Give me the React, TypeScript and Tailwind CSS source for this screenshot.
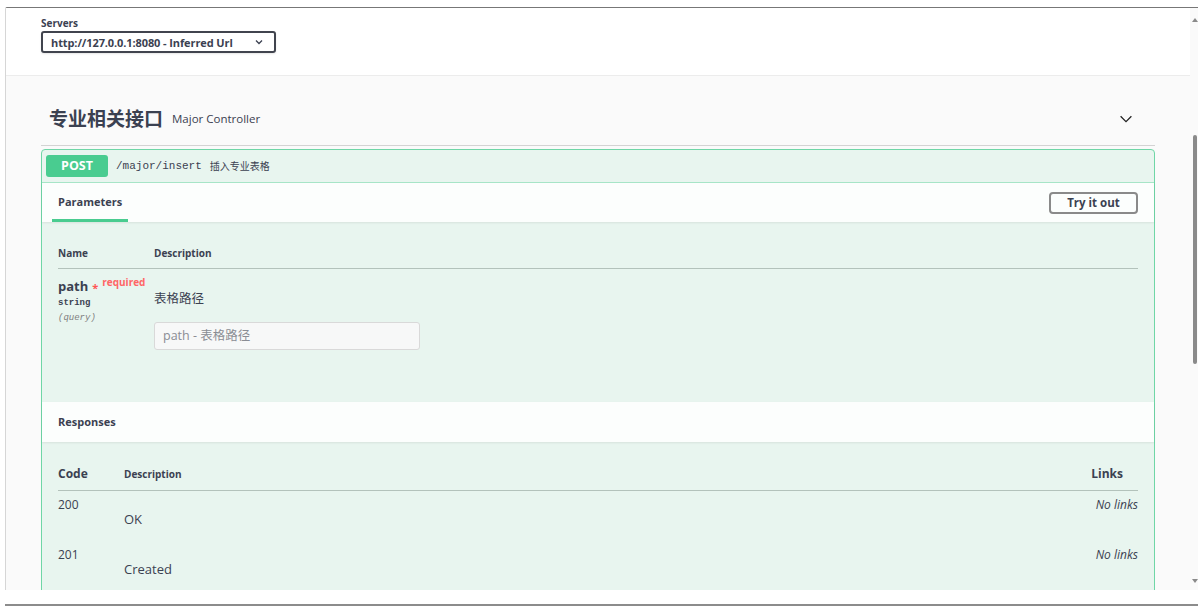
import React from 'react';

const Chevron = ({ className, width = 1.4 }: { className?: string; width?: number }) => (
  <svg viewBox="0 0 20 20" className={className} fill="none" stroke="currentColor" strokeWidth={width}>
    <path d="M4 7l6 6 6-6" />
  </svg>
);

function ServerBar() {
  return (
    <div className="bg-white h-[68px] pl-[35px] pt-[9px] border-b border-[#ececec]">
      <div className="text-[10px] font-bold leading-[12px] text-[#3b4151]">Servers</div>
      <div className="mt-[2px] w-[235px] h-[22px] border-2 border-[#41444e] rounded-[3px] flex items-center pl-[8px] pr-[10px] shadow-[0_1px_2px_rgba(0,0,0,0.1)]">
        <span className="text-[11px] font-bold text-[#3b4151] leading-none whitespace-nowrap tracking-[-0.1px]">http://127.0.0.1:8080 - Inferred Url</span>
        <Chevron className="w-[10px] h-[10px] ml-auto text-[#3b4151]" width={2.6} />
      </div>
    </div>
  );
}

function ParamTable() {
  return (
    <div className="px-[16px] h-[180px]">
      <div className="flex items-start pt-[25px] h-[47px] border-b border-[#b3c2bb] text-[10px] leading-[12px] font-bold text-[#3b4151]">
        <div className="w-[96px]">Name</div>
        <div>Description</div>
      </div>
      <div className="flex pt-[8px]">
        <div className="w-[96px]">
          <div className="flex items-start">
            <span className="text-[13px] font-bold leading-[18px] text-[#3b4151]">path</span>
            <span className="text-[#ff5555] text-[11px] leading-[10px] ml-[4px] mt-[6px] font-bold">*</span>
            <span className="text-[#ff6666] text-[10px] font-bold leading-[12px] ml-[4px] -mt-[1px]">required</span>
          </div>
          <div className="font-['Liberation_Mono',monospace] text-[9px] font-bold text-[#3b4151] leading-[14px] mt-[1px]">string</div>
          <div className="font-['Liberation_Mono',monospace] text-[9px] italic text-[#808080] leading-[14px] mt-[1px]">(query)</div>
        </div>
        <div className="pt-[13px]">
          <div className="text-[12.5px] leading-[17px] text-[#3b4151]">表格路径</div>
          <div className="mt-[15px] w-[266px] h-[28px] bg-[#f7f8f8] border border-[#d9d9d9] rounded-[3px] flex items-center px-[8px] text-[12.5px] text-[#8a8d94]">
            path - 表格路径
          </div>
        </div>
      </div>
    </div>
  );
}

function ResponseTable() {
  const rows = [
    { code: '200', desc: 'OK' },
    { code: '201', desc: 'Created' },
  ];
  return (
    <div className="px-[16px] pt-[25px]">
      <div className="flex items-start h-[24px] leading-[14px] border-b border-[#b3c2bb] text-[#3b4151]">
        <div className="w-[66px] text-[12px] font-bold">Code</div>
        <div className="text-[10px] font-bold">Description</div>
        <div className="ml-auto mr-[15px] text-[12px] font-bold">Links</div>
      </div>
      {rows.map(r => (
        <div key={r.code} className="flex h-[50px] pt-[6px] text-[#3b4151]">
          <div className="w-[66px] text-[12px] leading-[16px]">{r.code}</div>
          <div className="pt-[14px] text-[13px] leading-[16px]">{r.desc}</div>
          <div className="ml-auto text-[12px] italic leading-[16px]">No links</div>
        </div>
      ))}
    </div>
  );
}

function OpBlock() {
  return (
    <div className="mt-[3px] border border-[#6fd6a6] rounded-[4px] bg-[#e8f5ef] h-[460px]">
      <div className="h-[33px] flex items-center px-[4px] border-b border-[#a8e6c8]">
        <div className="w-[62px] h-[22px] bg-[#49cc90] rounded-[3px] flex items-center justify-center text-white text-[12.5px] font-bold">
          POST
        </div>
        <span className="ml-[8px] font-['Liberation_Mono',monospace] text-[11px] text-[#3b4151]">/major/insert</span>
        <span className="ml-[8px] text-[10px] text-[#3b4151]">插入专业表格</span>
      </div>
      <div className="h-[39px] bg-[#fcfefd] flex items-end pl-[10px] pr-[16px] shadow-[0_1px_2px_rgba(0,0,0,0.08)]">
        <div className="h-full flex flex-col justify-end">
          <div className="px-[6px] text-[11px] font-bold text-[#3b4151] leading-[14px] mb-[10px]">Parameters</div>
          <div className="h-[3px] bg-[#49cc90]" />
        </div>
        <div className="ml-auto self-center w-[89px] h-[22px] border-2 border-[#8a8a8a] rounded-[4px] flex items-center justify-center text-[11.5px] font-bold text-[#3b4151]">
          Try it out
        </div>
      </div>
      <ParamTable />
      <div className="h-[40px] bg-[#fcfefd] flex items-center px-[16px] text-[11px] font-bold text-[#3b4151] shadow-[0_1px_2px_rgba(0,0,0,0.08)]">
        Responses
      </div>
      <ResponseTable />
    </div>
  );
}

function ScrollBar() {
  return (
    <div className="w-[8px] bg-[#fafafa] relative">
      <div className="absolute top-[10px] left-[2px] w-0 h-0 border-l-[3px] border-r-[3px] border-b-[4px] border-l-transparent border-r-transparent border-b-[#8a8a8a]" />
      <div className="absolute top-[127px] left-[3px] w-[4px] h-[229px] rounded-[2px] bg-[#8a8a8a]" />
      <div className="absolute top-[571px] left-[2px] w-0 h-0 border-l-[3px] border-r-[3px] border-t-[4px] border-l-transparent border-r-transparent border-t-[#8a8a8a]" />
    </div>
  );
}

export default function App() {
  return (
    <div className="w-[1198px] h-[607px] bg-white overflow-hidden font-['Open_Sans','Noto_Sans_CJK_SC',sans-serif]">
      <div className="h-[7px]" />
      <div className="ml-[5px] h-[583px] flex border-t border-t-[#777] border-l border-l-[#d6d6d6] rounded-tl-[2px] overflow-hidden">
        <div className="flex-1 bg-[#fafafa] overflow-hidden">
          <ServerBar />
          <div className="px-[35px]">
            <div className="mt-[17px] h-[53px] flex items-center border-b border-[#d3d3d3] pl-[8px]">
              <span className="text-[19px] font-bold text-[#3b4151]">专业相关接口</span>
              <span className="ml-[9px] text-[11.5px] text-[#3b4151]">Major Controller</span>
              <Chevron className="w-[18px] h-[18px] ml-auto mr-[20px] text-[#222]" />
            </div>
            <OpBlock />
          </div>
        </div>
        <ScrollBar />
      </div>
      <div className="h-[14px]" />
      <div className="ml-[5px] h-[2px] bg-[#8c8c8c]" />
    </div>
  );
}
